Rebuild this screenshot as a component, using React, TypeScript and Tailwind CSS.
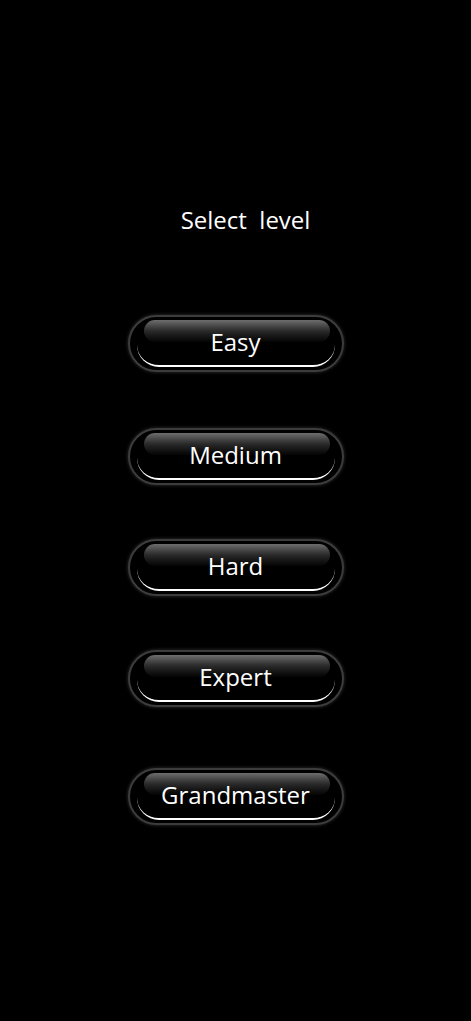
import React from 'react'

const levels = [
	{ label: 'Easy', gap: 'mt-[79px]' },
	{ label: 'Medium', gap: 'mt-[56px]' },
	{ label: 'Hard', gap: 'mt-[54px]' },
	{ label: 'Expert', gap: 'mt-[54px]' },
	{ label: 'Grandmaster', gap: 'mt-[61px]' }
]

function LevelButton({ label }: { label: string }) {
	return (
		<button className="relative w-[216px] h-[57px] rounded-full bg-black border-2 border-[#3c3c3c] shadow-[0_0_3px_1px_rgba(255,255,255,0.12)]">
			{/* glossy top highlight */}
			<span className="absolute left-[14px] right-[12px] top-[3px] h-[22px] rounded-full bg-gradient-to-b from-[#6e6e6e] via-[#2a2a2a] to-[#050505]" />
			{/* white bottom rim */}
			<span className="absolute left-[7px] right-[7px] top-[6px] bottom-[3px] rounded-full border-b-[2px] border-white" />
			<span className="relative text-white text-[24px] leading-none font-['Open_Sans',sans-serif]">
				{label}
			</span>
		</button>
	)
}

export default function App() {
	return (
		<div className="min-h-[1021px] w-full bg-black flex flex-col items-center pt-[204px] font-['Open_Sans',sans-serif]">
			<h1 className="ml-[20px] text-white text-[24px] leading-[32px] whitespace-pre">Select  level</h1>
			{levels.map((l) => (
				<div key={l.label} className={l.gap}>
					<LevelButton label={l.label} />
				</div>
			))}
		</div>
	)
}
